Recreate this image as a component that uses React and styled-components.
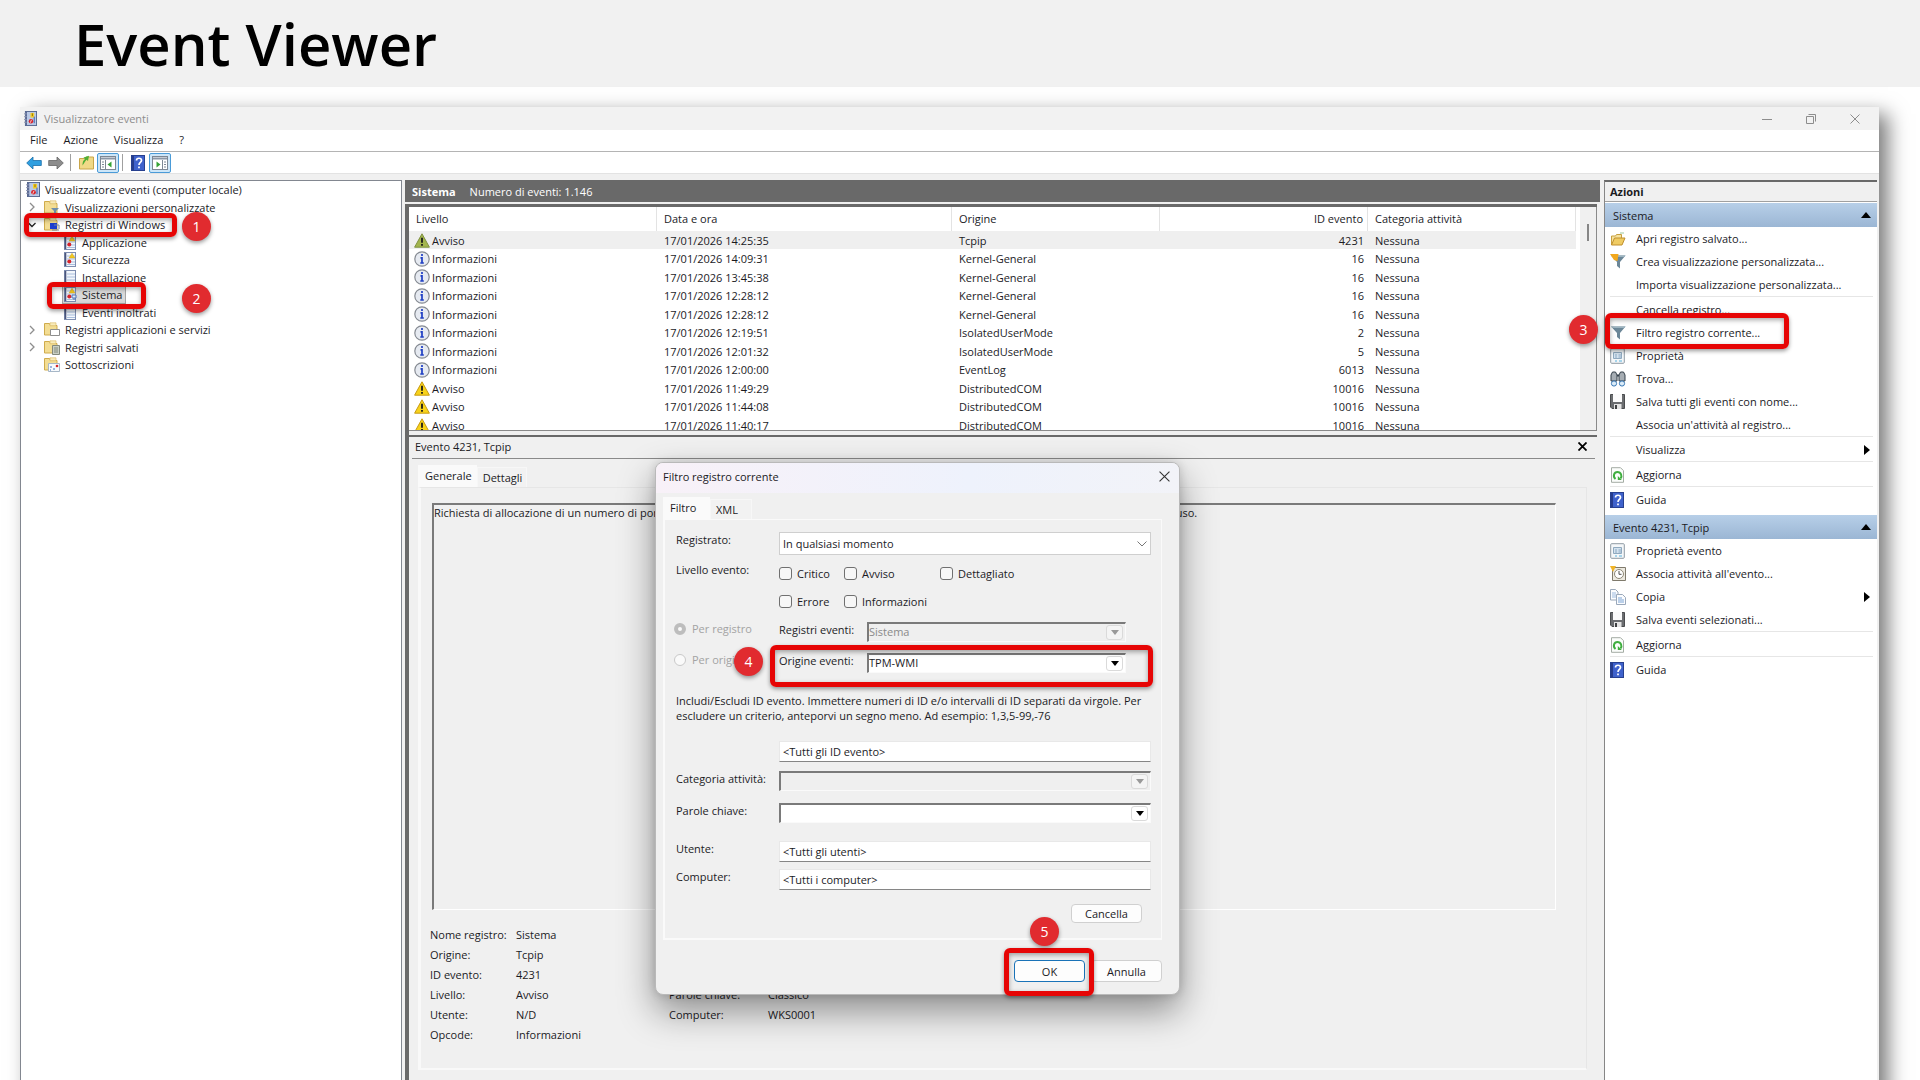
import React from "react";
import styled, { createGlobalStyle, css } from "styled-components";

const Global = createGlobalStyle`
  *, *::before, *::after { box-sizing: border-box; }
  html, body { margin: 0; padding: 0; }
  body { background: #fff; font-family: "Open Sans", "Noto Sans", sans-serif; font-size: 11px; line-height: 15px; color: #1b1b1f; }
  button, input, select { font: inherit; color: inherit; margin: 0; }
  svg { display: block; flex: none; }
`;

const DARK = "#696969";
const FACE = "#f0f0f0";

/* ---------- page and window frame ---------- */
const Page = styled.div`
  height: 100vh;
  display: flex;
  flex-direction: column;
  overflow: hidden;
`;
const Banner = styled.header`
  flex: none;
  height: 87px;
  padding-left: 74px;
  display: flex;
  align-items: center;
  background: #f1f1f1;
`;
const BannerTitle = styled.h1`
  margin: 0;
  font-family: "Open Sans", "Noto Sans", sans-serif;
  font-size: 58px;
  line-height: 80px;
  font-weight: 600;
  color: #000;
`;
const Window = styled.main`
  flex: 1;
  min-height: 0;
  margin: 20px 41px -40px 20px;
  display: flex;
  flex-direction: column;
  background: ${FACE};
  box-shadow: 9px 7px 19px rgba(0, 0, 0, 0.52);
`;
const TitleBar = styled.div`
  flex: none;
  height: 23px;
  padding: 0 19px 0 4px;
  display: flex;
  align-items: center;
  gap: 7px;
  background: #f2f2f2;
  color: #8d8d8d;
`;
const TitleText = styled.span`
  flex: 1;
`;
const CaptionButtons = styled.div`
  display: flex;
  gap: 34px;
`;
const PlainButton = styled.button`
  display: flex;
  padding: 0;
  border: 0;
  background: none;
`;
const MenuBar = styled.nav`
  flex: none;
  height: 22px;
  padding: 0 10px 2px;
  display: flex;
  align-items: center;
  gap: 16px;
  background: #fff;
  border-bottom: 1px solid #b4b4b4;
`;
const ToolBar = styled.div`
  flex: none;
  height: 22px;
  padding: 0 3px;
  display: flex;
  align-items: center;
  background: #fff;
  border-bottom: 1px solid #e3e3e3;
`;
const ToolButton = styled.button`
  width: 22px;
  height: 20px;
  padding: 0;
  display: flex;
  align-items: center;
  justify-content: center;
  border: 1px solid ${(p) => (p.$on ? "#4a9bd8" : "transparent")};
  border-radius: 2px;
  background: ${(p) => (p.$on ? "#cde6f8" : "none")};
`;
const ToolSep = styled.span`
  width: 1px;
  height: 17px;
  margin: 0 4px 0 3px;
  background: #a0a0a0;
`;
const Body = styled.div`
  flex: 1;
  min-height: 0;
  display: flex;
  gap: 3px;
  padding: 6px 2px 0 0;
`;

/* ---------- callouts ---------- */
const Highlight = styled.span`
  position: absolute;
  z-index: 3;
  top: ${(p) => p.$top}px;
  left: ${(p) => p.$left}px;
  width: ${(p) => p.$w}px;
  height: ${(p) => p.$h}px;
  border: 5px solid #e60505;
  border-radius: 6px;
  box-shadow: 0 2px 4px rgba(0, 0, 0, 0.4), inset 0 2px 5px rgba(0, 0, 0, 0.35);
  pointer-events: none;
`;
const Badge = styled.span`
  position: absolute;
  z-index: 4;
  top: ${(p) => p.$top}px;
  left: ${(p) => p.$left}px;
  width: 29px;
  height: 29px;
  border-radius: 50%;
  display: flex;
  align-items: center;
  justify-content: center;
  background: #e12b2f;
  box-shadow: 0 2px 4px rgba(0, 0, 0, 0.4);
  color: #fff;
  font-size: 14px;
  font-weight: 500;
  pointer-events: none;
`;

/* ---------- tree ---------- */
const TreePane = styled.aside`
  flex: none;
  width: 382px;
  background: #fff;
  border: 1px solid #828790;
`;
const TreeList = styled.ul`
  margin: 0;
  padding: 0;
  list-style: none;
`;
const TreeRow = styled.li`
  position: relative;
  height: 17px;
  padding-left: ${(p) => [5, 7, 42][p.$level]}px;
  display: flex;
  align-items: center;
  &:nth-child(even) { height: 18px; }
`;
const Expander = styled.span`
  width: 16px;
  display: flex;
`;
const TreeLabel = styled.span`
  padding: 0 3px 0 5px;
  white-space: nowrap;
`;
const TreeItem = styled.span`
  height: 17px;
  display: flex;
  align-items: center;
  ${(p) => p.$selected && css`background: #d9d9d9; box-shadow: 0 0 0 1px #a5a5a5;`}
`;

/* ---------- centre ---------- */
const Center = styled.section`
  position: relative;
  flex: 1;
  min-width: 0;
  display: flex;
  flex-direction: column;
`;
const CenterHead = styled.div`
  flex: none;
  height: 22px;
  margin-bottom: 2px;
  padding: 0 7px;
  display: flex;
  align-items: center;
  gap: 14px;
  background: ${DARK};
  color: #fff;
`;
const Frame = styled.div`
  flex: 1;
  min-height: 0;
  margin-right: 3px;
  display: flex;
  flex-direction: column;
  border-left: 4px solid ${DARK};
  border-top: 3px solid ${DARK};
`;
const ListBox = styled.div`
  flex: none;
  height: 224px;
  display: flex;
  background: #fff;
  border-right: 1px solid #8a8a8a;
  border-bottom: 1px solid #8a8a8a;
  overflow: hidden;
`;
const TableWrap = styled.div`
  flex: 1;
  min-width: 0;
`;
const ScrollTrack = styled.div`
  width: 16px;
  margin-left: 4px;
  padding: 17px 0 0 7px;
  background: ${FACE};
`;
const ScrollThumb = styled.div`
  width: 2px;
  height: 17px;
  background: #868686;
`;
const Table = styled.table`
  width: 100%;
  table-layout: fixed;
  border-collapse: separate;
  border-spacing: 0;
`;
const Col = styled.col`
  width: ${(p) => p.$w}px;
`;
const Th = styled.th`
  height: 24px;
  padding: 0 4px 1px 7px;
  border-right: 1px solid #e3e3e3;
  font-weight: 400;
  text-align: ${(p) => (p.$right ? "right" : "left")};
`;
const Tr = styled.tr`
  height: 18px;
  background: ${(p) => (p.$selected ? "#efefef" : "none")};
  &:nth-child(even) { height: 19px; }
`;
const Td = styled.td`
  padding: 0 4px 0 ${(p) => (p.$first ? 5 : 7)}px;
  text-align: ${(p) => (p.$right ? "right" : "left")};
  white-space: nowrap;
`;
const LevelCell = styled.span`
  display: flex;
  align-items: center;
  gap: 2px;
`;

/* ---------- detail ---------- */
const Detail = styled.div`
  flex: 1;
  min-height: 0;
  margin-top: 4px;
  padding: 0 2px 50px 3px;
  display: flex;
  flex-direction: column;
  border-top: 2px solid ${DARK};
`;
const DetailHead = styled.div`
  flex: none;
  height: 22px;
  padding: 0 8px 2px 3px;
  display: flex;
  align-items: center;
  justify-content: space-between;
  border-bottom: 1px solid #8a8a8a;
`;
const Tabs = styled.div`
  flex: none;
  display: flex;
  align-items: flex-end;
  margin: ${(p) => p.$m};
`;
const Tab = styled.button`
  min-width: ${(p) => (p.$active ? 47 : 42)}px;
  height: ${(p) => (p.$active ? 22 : 20)}px;
  padding: ${(p) => (p.$active ? "0 4px 2px 6px" : "0 4px 1px 5px")};
  border: 1px solid ${(p) => (p.$active ? "#fafafa" : "#f7f7f7")};
  border-bottom: 0;
  background: ${(p) => (p.$active ? "#fafafa" : "#f2f2f2")};
  text-align: left;
`;
const DetailPanel = styled.div`
  flex: 1;
  min-height: 0;
  margin: 0 8px 0 6px;
  padding: 15px 30px 23px 11px;
  display: flex;
  flex-direction: column;
  border: 1px solid #e6e6e6;
  border-left: 3px solid #f9f9f9;
  border-bottom: 2px solid #f9f9f9;
`;
const Message = styled.div`
  flex: 1;
  min-height: 0;
  border: 1px solid #fff;
  border-top: 2px solid #7a7a7a;
  border-left: 2px solid #7a7a7a;
  white-space: nowrap;
  overflow: hidden;
`;
const Meta = styled.dl`
  flex: none;
  margin: 15px 0 0 -2px;
  padding: 0;
  display: grid;
  grid-template-columns: 86px 153px 99px 1fr;
  line-height: 20px;
`;
const MetaCell = styled.dd`
  margin: 0;
`;
const MetaLabel = styled.dt`
  margin: 0;
`;

/* ---------- dialog ---------- */
const Dialog = styled.form`
  position: absolute;
  z-index: 2;
  top: 282px;
  left: 250px;
  width: 525px;
  padding: 0 17px 12px 7px;
  background: ${FACE};
  border: 1px solid #b9b9b9;
  border-radius: 8px;
  box-shadow: 0 16px 36px rgba(0, 0, 0, 0.42), 0 0 10px rgba(0, 0, 0, 0.15);
`;
const DialogTitle = styled.div`
  height: 30px;
  margin: 0 -17px 4px -7px;
  padding: 0 9px 3px 7px;
  display: flex;
  align-items: center;
  justify-content: space-between;
  border-radius: 7px 7px 0 0;
  background: linear-gradient(90deg, #f8f1f8, #eef2fc 60%, #f2f3f8);
`;
const DialogPanel = styled.div`
  position: relative;
  padding: 12px 10px 15px 11px;
  border: 1px solid #fafafa;
  border-left: 2px solid #fafafa;
  border-bottom: 2px solid #fafafa;
`;
const FormRow = styled.div`
  margin-top: ${(p) => p.$gap || 0}px;
  display: grid;
  grid-template-columns: ${(p) => (p.$split ? "103px 88px 259px" : "103px 1fr")};
  align-items: start;
`;
const FieldLabel = styled.label`
  white-space: nowrap;
`;
const SelectWrap = styled.span`
  position: relative;
  display: flex;
  align-items: center;
`;
const SelectBox = styled.select`
  width: 100%;
  height: 23px;
  padding: 0 24px 0 3px;
  appearance: none;
  border: 1px solid #cfcfcf;
  border-radius: 0;
  background: #fff;
`;
const ComboBox = styled.select`
  width: 100%;
  height: 20px;
  padding: 0 24px 3px 0;
  appearance: none;
  border: 1px solid #fafafa;
  border-top: 2px solid #7a7a7a;
  border-left: 2px solid #7a7a7a;
  border-radius: 0;
  background: #fff;
  &:disabled { background: #efefef; color: #8a8a8a; opacity: 1; }
`;
const DropMark = styled.span`
  position: absolute;
  right: ${(p) => (p.$flat ? 4 : 3)}px;
  width: ${(p) => (p.$flat ? 10 : 17)}px;
  height: 15px;
  display: flex;
  align-items: center;
  justify-content: center;
  border: ${(p) => (p.$flat ? "0" : "1px solid #dadada")};
  border-radius: 3px;
  background: ${(p) => (p.$off ? "#f4f4f4" : "#fff")};
  pointer-events: none;
`;
const TextBox = styled.input`
  width: 100%;
  height: 21px;
  padding: 0 3px;
  border: 1px solid #e8e8e8;
  border-bottom: 1px solid #868686;
  background: #fff;
`;
const Checks = styled.div`
  padding-top: 3px;
  display: grid;
  grid-template-columns: 65px 96px 1fr;
  row-gap: 11px;
`;
const CheckLabel = styled.label`
  height: 17px;
  display: flex;
  align-items: center;
  gap: 5px;
`;
const Check = styled.input`
  appearance: none;
  width: 13px;
  height: 13px;
  border: 1px solid #707070;
  border-radius: 3px;
  background: #f7f7f7;
`;
const RadioLabel = styled.label`
  height: 13px;
  display: flex;
  align-items: center;
  gap: 6px;
  margin-left: -2px;
  color: #a3a3a3;
`;
const Radio = styled.input`
  appearance: none;
  width: 12px;
  height: 12px;
  border: ${(p) => (p.defaultChecked ? "4px solid #bdbdbd" : "1px solid #c9c9c9")};
  border-radius: 50%;
  background: #fafafa;
`;
const Hint = styled.p`
  margin: 20px 0 0;
`;
const ButtonRow = styled.div`
  display: flex;
  justify-content: flex-end;
  gap: 6px;
  margin-top: ${(p) => p.$gap}px;
  padding-right: ${(p) => p.$inset || 0}px;
`;
const PushButton = styled.button`
  width: 71px;
  height: ${(p) => (p.$small ? 19 : 22)}px;
  padding: 0;
  background: #fdfdfd;
  border: 1px solid ${(p) => (p.$primary ? "#1a73b8" : "#d0d0d0")};
  border-radius: 4px;
`;

/* ---------- actions ---------- */
const Actions = styled.aside`
  flex: none;
  width: 273px;
  margin-left: 1px;
  background: #fff;
  border-left: 1px solid #868686;
  border-top: 2px solid ${DARK};
`;
const ActionsTitle = styled.h2`
  height: 20px;
  margin: 0 0 1px;
  padding: 1px 5px 0;
  font-size: 11px;
  line-height: 18px;
  font-weight: 700;
  background: ${FACE};
  border-bottom: 1px solid #a0a0a0;
`;
const SectionHead = styled.h3`
  height: 24px;
  margin: ${(p) => (p.$gap ? "4px 0 0" : "0")};
  padding: 0 6px 0 8px;
  display: flex;
  align-items: center;
  justify-content: space-between;
  font-size: 11px;
  font-weight: 400;
  background: linear-gradient(#b7cfe8, #9bb6d4);
`;
const ActionItem = styled.div`
  position: relative;
`;
const ActionButton = styled.button`
  width: 100%;
  height: 23px;
  padding: 0 7px 0 5px;
  display: grid;
  grid-template-columns: 26px 1fr auto;
  align-items: center;
  border: 0;
  background: none;
  text-align: left;
`;
const Sep = styled.hr`
  height: 1px;
  margin: 0 4px 1px 5px;
  border: 0;
  background: #e6e6e6;
`;

/* ---------- icons ---------- */
const Book = ({ size = 14 }) => (
  <svg width={size} height="15" viewBox="0 0 14 16" preserveAspectRatio="none">
    <rect x="1.5" y=".5" width="12" height="15" fill="#b9c9e6" stroke="#56678f" />
    <path d="M2.500 1v14" stroke="#5a6a96" strokeWidth="1.500" />
    <path d="M0 3h3M0 6h3M0 9h3M0 12h3" stroke="#8c94ad" />
    <path d="M7 2h4v5H7z" fill="#f4cf2b" />
    <path d="M9 2.500v3" stroke="#8a6a00" />
    <circle cx="7.500" cy="11" r="2.400" fill="#d8232a" />
    <path d="M8 9.500 6.800 12.500" stroke="#fff" strokeWidth=".8" />
    <path d="M11 6v7" stroke="#3558a8" />
  </svg>
);
const Log = ({ kind }) => (
  <svg width="14" height="15" viewBox="0 0 14 15">
    <rect x="1.5" y=".5" width="11" height="14" fill="#f3f7fc" stroke="#7d8db0" />
    <path d="M2.5 1v13" stroke="#4c567c" strokeWidth="1.6" />
    <path d="M4 4h8M4 7h8M4 10h8M4 12.5h8" stroke="#a9bedd" />
    {kind !== "plain" && <path d="M9 1.2 12 6H6z" fill="#f3c81f" stroke="#c79a12" strokeWidth=".4" />}
    {kind !== "plain" && <circle cx="6.3" cy="9.5" r="2" fill="#d8232a" />}
    {kind === "system" && <path d="M9 8h4v3H9zM10 12h3" fill="#dfeaf7" stroke="#4f74b5" />}
  </svg>
);
const Folder = ({ kind }) => (
  <svg width="16" height="15" viewBox="0 0 16 15">
    <path d="M.5 13V1.5h5l1 2H13V13z" fill="#f3dd93" stroke="#cfab4c" />
    <path d="M6 .8h6v3H6z" fill="#f8ebbb" stroke="#d6b65c" strokeWidth=".6" />
    {kind === "filter" && <path d="M7 8h8l-3 3v4l-2-1v-3z" fill="#6f8fab" />}
    {kind === "windows" && <path d="M6 6h7v6H6z" fill="#1c3fd0" />}
    {kind === "windows" && <path d="M8 13h7M10 8h5v4" stroke="#74869e" fill="none" />}
    {kind === "apps" && <path d="M6.500 7.500h9v6h-9z" fill="#fff" stroke="#8e8e8e" />}
    {kind === "saved" && <path d="M8.500 5.500h7v9h-7z" fill="#c9cfc4" stroke="#83897d" />}
    {kind === "saved" && <path d="M10 8h4M10 10h4M10 12h4" stroke="#83897d" />}
    {kind === "sub" && <path d="M4.500 6.500h11v8h-11z" fill="#f7fafd" stroke="#a7b7c7" />}
    {kind === "sub" && <path d="M6 10h2M9 12h2M6 13h1" stroke="#3f6fc0" />}
    {kind === "sub" && <circle cx="13" cy="9" r="1.300" fill="#d8232a" />}
  </svg>
);
const Chevron = ({ open }) => (
  <svg width="8" height="10" viewBox="0 0 8 10" fill="none">
    <path d={open ? "M.5 3 4 6.500 7.500 3" : "M2 1l4 4-4 4"} stroke={open ? "#222" : "#8e8e8e"} strokeWidth="1.300" />
  </svg>
);
const Warning = ({ muted }) => (
  <svg width="16" height="15" viewBox="0 0 16 15">
    <path d="M8 .8 15.400 14.200H.6z" fill={muted ? "#a3b54e" : "#f7d21b"} stroke={muted ? "#7f9140" : "#c79a12"} strokeLinejoin="round" />
    <path d="M8 4.800v5M8 11v1.800" stroke="#1a1a1a" strokeWidth="1.800" />
  </svg>
);
const Info = () => (
  <svg width="16" height="16" viewBox="0 0 16 16">
    <circle cx="8" cy="8" r="7.200" fill="#e6eaf1" stroke="#858a92" strokeWidth="1.200" />
    <path d="M8 3v2M6.500 6.800H8V12M6.300 12h3.500" stroke="#1f3fc4" strokeWidth="1.700" fill="none" />
  </svg>
);
const Arrow = ({ back }) => (
  <svg width="16" height="14" viewBox="0 0 16 14">
    <path
      d={back ? "M.7 7 7 1v3.500h8.300v5H7V13z" : "M15.300 7 9 1v3.500H.7v5H9V13z"}
      fill={back ? "#2f9fe0" : "#8d8d8d"}
      stroke={back ? "#1b6ea8" : "#666"}
      strokeWidth=".8"
    />
  </svg>
);
const FolderUp = () => (
  <svg width="15" height="15" viewBox="0 0 15 15">
    <path d="M.5 14V3.500h5L7 2h7.500v12z" fill="#f0d987" stroke="#c9a64a" />
    <path d="M3.500 10.500c0-3.500.5-5 2.500-6.500L4.500 2.500 10 .8 9 6 7.500 4.800C6 6.500 5.500 8 3.500 10.500z" fill="#4fae35" />
  </svg>
);
const PaneIcon = ({ right }) => (
  <svg width="16" height="14" viewBox="0 0 16 14">
    <rect x=".5" y=".5" width="15" height="13" fill="#fff" stroke="#7d8794" />
    <path d="M1 2.500h14" stroke="#8b97a6" strokeWidth="2" />
    <path d={right ? "M10.500 4v10M12 6h2M12 8.500h2M12 11h2" : "M5.500 4v10M2 6h2M2 8.500h2M2 11h2"} stroke="#7d8794" />
    <path d={right ? "M4.500 5.500v6l4-3z" : "M11.500 5.500v6l-4-3z"} fill="#35a335" />
  </svg>
);
const Help = () => (
  <svg width="14" height="16" viewBox="0 0 14 16">
    <rect x=".5" y=".5" width="13" height="15" fill="#3f62cc" stroke="#27408f" />
    <path d="M2 1v14" stroke="#263c8c" strokeWidth="2" />
    <path d="M5.500 5.500c0-3 5-3 5 0 0 2-2.500 2-2.500 4.500M8 11.500v1.800" stroke="#fff" strokeWidth="1.700" fill="none" />
  </svg>
);
const OpenFolder = () => (
  <svg width="16" height="14" viewBox="0 0 16 14">
    <path d="M1.500 13V4h4l1-1.500h5V6" fill="#f6e3a0" stroke="#c79f3e" />
    <path d="M1.500 13 4.500 6h10.500l-3 7z" fill="#efcb63" stroke="#c08f2c" />
    <path d="M10 1h4" stroke="#9cc79c" />
  </svg>
);
const Funnel = ({ spark }) => (
  <svg width="16" height="15" viewBox="0 0 16 15">
    <path d="M1 1.500h14.500L10 8v6.500L7 12V8z" fill="#6c8798" />
    <path d="M1 1.500h14.500l-1 1.500H2.500z" fill="#9db4c0" />
    {spark && <path d="M0 0h8.500l-1 7L4 6z" fill="#f2a81d" />}
  </svg>
);
const Props = () => (
  <svg width="15" height="16" viewBox="0 0 15 16">
    <rect x=".7" y=".7" width="13.600" height="14.600" rx="1" fill="#f4f7f9" stroke="#8f9aa3" />
    <path d="M3.500 4.500h8v6h-8z" fill="#d4e3ef" stroke="#8fa9bf" />
    <path d="M5 7h2M8.500 7H11M5 9h2M8.500 9H11" stroke="#8aa7c2" />
    <path d="M5 13h2M9 13h3" stroke="#59b2dd" />
  </svg>
);
const Binoculars = () => (
  <svg width="16" height="16" viewBox="0 0 16 16">
    <path d="M1 9V4l1.500-3h3L7 4v6H1zM15 9V4l-1.500-3h-3L9 4v6h6z" fill="#a6adb3" stroke="#34404a" />
    <path d="M7 4.500h2" stroke="#34404a" strokeWidth="2" />
    <circle cx="4" cy="12.500" r="2.600" fill="#dcecf8" stroke="#3a79b5" />
    <circle cx="12" cy="12.500" r="2.600" fill="#dcecf8" stroke="#3a79b5" />
  </svg>
);
const Disk = () => (
  <svg width="15" height="15" viewBox="0 0 15 15">
    <path d="M.5.5h14v14H2l-1.500-1.500z" fill="#6b6d70" stroke="#4a4c4e" />
    <path d="M3 0h9v8H3z" fill="#fbfbfb" />
    <path d="M4 10h7.500v5H4z" fill="#e4e4e4" />
    <path d="M5 11h2v4H5z" fill="#3f4143" />
  </svg>
);
const Refresh = () => (
  <svg width="15" height="16" viewBox="0 0 15 16">
    <path d="M1.500.7h9l3 3v11.600h-12z" fill="#fbfdfb" stroke="#a4aca4" />
    <path d="M5.500 12C2.500 9.500 4 5 7.500 5s5 4 3 6.500" fill="none" stroke="#3fae3f" strokeWidth="2" />
    <path d="M7.800 9v4h4z" fill="#3fae3f" />
  </svg>
);
const TaskClock = () => (
  <svg width="16" height="15" viewBox="0 0 16 15">
    <path d="M2.500 1.500h13v13h-13z" fill="#ece9e0" stroke="#7f7a6c" />
    <circle cx="9" cy="8" r="4.500" fill="#fff" stroke="#8d8877" />
    <path d="M9 5v3.300h2.500" stroke="#4d4d4d" fill="none" />
    <path d="M0 0h6L3 6z" fill="#f0b429" />
  </svg>
);
const Copy = () => (
  <svg width="16" height="16" viewBox="0 0 16 16">
    <path d="M.5.5h5l2.500 2.500v8H.5z" fill="#fbfcfe" stroke="#9aa8ba" />
    <path d="M2 4h4M2 6h4M2 8h4" stroke="#9dbbe0" />
    <path d="M6.500 5.500h6l3 3v7h-9z" fill="#fbfcfe" stroke="#9aa8ba" />
    <path d="M8 9h4M8 11h6M8 13h6" stroke="#7ba3d4" />
  </svg>
);
const Cross = ({ size = 10, width = 1, color = "#333" }) => (
  <svg width={size} height={size} viewBox="0 0 10 10">
    <path d="M.5.5l9 9M9.500.5l-9 9" stroke={color} strokeWidth={width} />
  </svg>
);
const Minimize = () => (
  <svg width="10" height="10" viewBox="0 0 10 10"><path d="M0 5.500h10" stroke="#8d8d8d" /></svg>
);
const Restore = () => (
  <svg width="10" height="10" viewBox="0 0 10 10" fill="none" stroke="#8d8d8d">
    <path d="M.5 2.500h7v7h-7zM2.500.5h7v7" />
  </svg>
);
const Down = ({ off }) => (
  <svg width="8" height="5" viewBox="0 0 8 5"><path d="M0 0h8L4 5z" fill={off ? "#999" : "#000"} /></svg>
);
const DownLine = () => (
  <svg width="10" height="6" viewBox="0 0 10 6"><path d="M.5.5 5 5 9.500.5" fill="none" stroke="#777" /></svg>
);
const Up = () => (
  <svg width="10" height="6" viewBox="0 0 10 6"><path d="M0 6h10L5 0z" fill="#000" /></svg>
);
const Right = () => (
  <svg width="6" height="10" viewBox="0 0 6 10"><path d="M0 0v10l6-5z" fill="#000" /></svg>
);

/* ---------- data ---------- */
const tree = [
  { level: 0, label: "Visualizzatore eventi (computer locale)", icon: <Book /> },
  { level: 1, label: "Visualizzazioni personalizzate", icon: <Folder kind="filter" />, exp: "closed" },
  { level: 1, label: "Registri di Windows", icon: <Folder kind="windows" />, exp: "open", mark: { n: 1, top: -3, left: 3, w: 153, h: 24, by: -4 } },
  { level: 2, label: "Applicazione", icon: <Log /> },
  { level: 2, label: "Sicurezza", icon: <Log /> },
  { level: 2, label: "Installazione", icon: <Log kind="plain" /> },
  { level: 2, label: "Sistema", icon: <Log kind="system" />, selected: true, mark: { n: 2, top: -4, left: 26, w: 99, h: 27, by: -2 } },
  { level: 2, label: "Eventi inoltrati", icon: <Log kind="plain" /> },
  { level: 1, label: "Registri applicazioni e servizi", icon: <Folder kind="apps" />, exp: "closed" },
  { level: 1, label: "Registri salvati", icon: <Folder kind="saved" />, exp: "closed" },
  { level: 1, label: "Sottoscrizioni", icon: <Folder kind="sub" />, exp: "none" },
];
const events = [
  ["Avviso", "17/01/2026 14:25:35", "Tcpip", "4231"],
  ["Informazioni", "17/01/2026 14:09:31", "Kernel-General", "16"],
  ["Informazioni", "17/01/2026 13:45:38", "Kernel-General", "16"],
  ["Informazioni", "17/01/2026 12:28:12", "Kernel-General", "16"],
  ["Informazioni", "17/01/2026 12:28:12", "Kernel-General", "16"],
  ["Informazioni", "17/01/2026 12:19:51", "IsolatedUserMode", "2"],
  ["Informazioni", "17/01/2026 12:01:32", "IsolatedUserMode", "5"],
  ["Informazioni", "17/01/2026 12:00:00", "EventLog", "6013"],
  ["Avviso", "17/01/2026 11:49:29", "DistributedCOM", "10016"],
  ["Avviso", "17/01/2026 11:44:08", "DistributedCOM", "10016"],
  ["Avviso", "17/01/2026 11:40:17", "DistributedCOM", "10016"],
];
const meta = [
  ["Nome registro:", "Sistema", "", ""],
  ["Origine:", "Tcpip", "Registrato:", "17/01/2026 14:25:35"],
  ["ID evento:", "4231", "Categoria attività:", "Nessuna"],
  ["Livello:", "Avviso", "Parole chiave:", "Classico"],
  ["Utente:", "N/D", "Computer:", "WKS0001"],
  ["Opcode:", "Informazioni", "", ""],
];
const logActions = [
  { label: "Apri registro salvato...", icon: <OpenFolder /> },
  { label: "Crea visualizzazione personalizzata...", icon: <Funnel spark /> },
  { label: "Importa visualizzazione personalizzata..." },
  { label: "Cancella registro...", sep: true },
  { label: "Filtro registro corrente...", icon: <Funnel />, mark: true },
  { label: "Proprietà", icon: <Props /> },
  { label: "Trova...", icon: <Binoculars /> },
  { label: "Salva tutti gli eventi con nome...", icon: <Disk /> },
  { label: "Associa un'attività al registro..." },
  { label: "Visualizza", sep: true, more: true },
  { label: "Aggiorna", icon: <Refresh />, sep: true },
  { label: "Guida", icon: <Help />, sep: true },
];
const eventActions = [
  { label: "Proprietà evento", icon: <Props /> },
  { label: "Associa attività all'evento...", icon: <TaskClock /> },
  { label: "Copia", icon: <Copy />, more: true },
  { label: "Salva eventi selezionati...", icon: <Disk /> },
  { label: "Aggiorna", icon: <Refresh />, sep: true },
  { label: "Guida", icon: <Help />, sep: true },
];

const ActionList = ({ items }) =>
  items.map((a) => (
    <React.Fragment key={a.label}>
      {a.sep && <Sep />}
      <ActionItem>
        <ActionButton type="button">
          <span>{a.icon}</span>
          <span>{a.label}</span>
          {a.more && <Right />}
        </ActionButton>
        {a.mark && <Highlight $top={-8} $left={0} $w={184} $h={36} />}
        {a.mark && <Badge $top={-6} $left={-36}>3</Badge>}
      </ActionItem>
    </React.Fragment>
  ));

const Combo = ({ id, value = "", disabled }) => (
  <SelectWrap>
    <ComboBox id={id} disabled={disabled} defaultValue={value}>
      <option>{value}</option>
    </ComboBox>
    <DropMark $off={disabled}><Down off={disabled} /></DropMark>
  </SelectWrap>
);

const FilterDialog = () => (
  <Dialog onSubmit={(e) => e.preventDefault()}>
    <DialogTitle>
      <span>Filtro registro corrente</span>
      <PlainButton type="button" aria-label="Chiudi"><Cross size={11} /></PlainButton>
    </DialogTitle>
    <Tabs $m="0">
      <Tab type="button" $active>Filtro</Tab>
      <Tab type="button">XML</Tab>
    </Tabs>
    <DialogPanel>
      <FormRow>
        <FieldLabel htmlFor="logged">Registrato:</FieldLabel>
        <SelectWrap>
          <SelectBox id="logged"><option>In qualsiasi momento</option></SelectBox>
          <DropMark $flat><DownLine /></DropMark>
        </SelectWrap>
      </FormRow>
      <FormRow $gap={7}>
        <span>Livello evento:</span>
        <Checks>
          <CheckLabel><Check type="checkbox" />Critico</CheckLabel>
          <CheckLabel><Check type="checkbox" />Avviso</CheckLabel>
          <CheckLabel><Check type="checkbox" />Dettagliato</CheckLabel>
          <CheckLabel><Check type="checkbox" />Errore</CheckLabel>
          <CheckLabel><Check type="checkbox" />Informazioni</CheckLabel>
        </Checks>
      </FormRow>
      <FormRow $split $gap={12}>
        <RadioLabel><Radio type="radio" name="by" defaultChecked disabled />Per registro</RadioLabel>
        <FieldLabel htmlFor="logs">Registri eventi:</FieldLabel>
        <Combo id="logs" value="Sistema" disabled />
      </FormRow>
      <FormRow $split $gap={11}>
        <RadioLabel><Radio type="radio" name="by" disabled />Per origine</RadioLabel>
        <FieldLabel htmlFor="sources">Origine eventi:</FieldLabel>
        <Combo id="sources" value="TPM-WMI" />
      </FormRow>
      <Highlight $top={125} $left={105} $w={383} $h={42} />
      <Badge $top={127} $left={69}>4</Badge>
      <Hint>
        Includi/Escludi ID evento. Immettere numeri di ID e/o intervalli di ID separati da virgole. Per
        escludere un criterio, anteporvi un segno meno. Ad esempio: 1,3,5-99,-76
      </Hint>
      <FormRow $gap={18}>
        <span />
        <TextBox aria-label="ID evento" defaultValue="<Tutti gli ID evento>" />
      </FormRow>
      <FormRow $gap={9}>
        <FieldLabel htmlFor="task">Categoria attività:</FieldLabel>
        <Combo id="task" disabled />
      </FormRow>
      <FormRow $gap={12}>
        <FieldLabel htmlFor="keywords">Parole chiave:</FieldLabel>
        <Combo id="keywords" />
      </FormRow>
      <FormRow $gap={18}>
        <FieldLabel htmlFor="user">Utente:</FieldLabel>
        <TextBox id="user" defaultValue="<Tutti gli utenti>" />
      </FormRow>
      <FormRow $gap={7}>
        <FieldLabel htmlFor="computer">Computer:</FieldLabel>
        <TextBox id="computer" defaultValue="<Tutti i computer>" />
      </FormRow>
      <ButtonRow $gap={14} $inset={9}>
        <PushButton type="button" $small>Cancella</PushButton>
      </ButtonRow>
      <Badge $top={397} $left={365}>5</Badge>
      <Highlight $top={428} $left={339} $w={90} $h={48} />
    </DialogPanel>
    <ButtonRow $gap={20}>
      <PushButton $primary>OK</PushButton>
      <PushButton type="button">Annulla</PushButton>
    </ButtonRow>
  </Dialog>
);

export default function App() {
  return (
    <Page>
      <Global />
      <Banner>
        <BannerTitle>Event Viewer</BannerTitle>
      </Banner>
      <Window>
        <TitleBar>
          <Book size={13} />
          <TitleText>Visualizzatore eventi</TitleText>
          <CaptionButtons>
            <PlainButton aria-label="Riduci a icona"><Minimize /></PlainButton>
            <PlainButton aria-label="Ripristina"><Restore /></PlainButton>
            <PlainButton aria-label="Chiudi"><Cross color="#8d8d8d" /></PlainButton>
          </CaptionButtons>
        </TitleBar>
        <MenuBar>
          <PlainButton>File</PlainButton>
          <PlainButton>Azione</PlainButton>
          <PlainButton>Visualizza</PlainButton>
          <PlainButton>?</PlainButton>
        </MenuBar>
        <ToolBar>
          <ToolButton aria-label="Indietro"><Arrow back /></ToolButton>
          <ToolButton aria-label="Avanti"><Arrow /></ToolButton>
          <ToolSep />
          <ToolButton aria-label="Su"><FolderUp /></ToolButton>
          <ToolButton $on aria-label="Mostra albero"><PaneIcon /></ToolButton>
          <ToolSep />
          <ToolButton aria-label="Guida"><Help /></ToolButton>
          <ToolButton $on aria-label="Mostra azioni"><PaneIcon right /></ToolButton>
        </ToolBar>
        <Body>
          <TreePane>
            <TreeList>
              {tree.map((t) => (
                <TreeRow key={t.label} $level={t.level}>
                  {t.exp && <Expander>{t.exp !== "none" && <Chevron open={t.exp === "open"} />}</Expander>}
                  <TreeItem $selected={t.selected}>
                    {t.icon}
                    <TreeLabel>{t.label}</TreeLabel>
                  </TreeItem>
                  {t.mark && <Highlight $top={t.mark.top} $left={t.mark.left} $w={t.mark.w} $h={t.mark.h} />}
                  {t.mark && <Badge $top={t.mark.by} $left={161}>{t.mark.n}</Badge>}
                </TreeRow>
              ))}
            </TreeList>
          </TreePane>
          <Center>
            <CenterHead>
              <b>Sistema</b>
              <span>Numero di eventi: 1.146</span>
            </CenterHead>
            <Frame>
              <ListBox>
                <TableWrap>
                  <Table>
                    <colgroup>
                      <Col $w={248} /><Col $w={295} /><Col $w={208} /><Col $w={208} /><Col $w={208} />
                    </colgroup>
                    <thead>
                      <tr>
                        <Th>Livello</Th><Th>Data e ora</Th><Th>Origine</Th><Th $right>ID evento</Th><Th>Categoria attività</Th>
                      </tr>
                    </thead>
                    <tbody>
                      {events.map(([level, date, source, id], i) => (
                        <Tr key={date + i} $selected={i === 0}>
                          <Td $first>
                            <LevelCell>
                              {level === "Avviso" ? <Warning muted={i === 0} /> : <Info />}
                              {level}
                            </LevelCell>
                          </Td>
                          <Td>{date}</Td>
                          <Td>{source}</Td>
                          <Td $right>{id}</Td>
                          <Td>Nessuna</Td>
                        </Tr>
                      ))}
                    </tbody>
                  </Table>
                </TableWrap>
                <ScrollTrack><ScrollThumb /></ScrollTrack>
              </ListBox>
              <Detail>
                <DetailHead>
                  <span>Evento 4231, Tcpip</span>
                  <PlainButton aria-label="Chiudi dettagli"><Cross size={9} width={2} color="#000" /></PlainButton>
                </DetailHead>
                <Tabs $m="6px 0 0 6px">
                  <Tab $active>Generale</Tab>
                  <Tab>Dettagli</Tab>
                </Tabs>
                <DetailPanel>
                  <Message>
                    Richiesta di allocazione di un numero di porta temporaneo dallo spazio di porte TCP globale non riuscita perché tutte le porte di tale tipo sono in uso.
                  </Message>
                  <Meta>
                    {meta.map(([a, b, c, d]) => (
                      <React.Fragment key={a}>
                        <MetaLabel>{a}</MetaLabel>
                        <MetaCell>{b}</MetaCell>
                        <MetaLabel>{c}</MetaLabel>
                        <MetaCell>{d}</MetaCell>
                      </React.Fragment>
                    ))}
                  </Meta>
                </DetailPanel>
              </Detail>
            </Frame>
            <FilterDialog />
          </Center>
          <Actions>
            <ActionsTitle>Azioni</ActionsTitle>
            <SectionHead>Sistema<Up /></SectionHead>
            <ActionList items={logActions} />
            <SectionHead $gap>Evento 4231, Tcpip<Up /></SectionHead>
            <ActionList items={eventActions} />
          </Actions>
        </Body>
      </Window>
    </Page>
  );
}
